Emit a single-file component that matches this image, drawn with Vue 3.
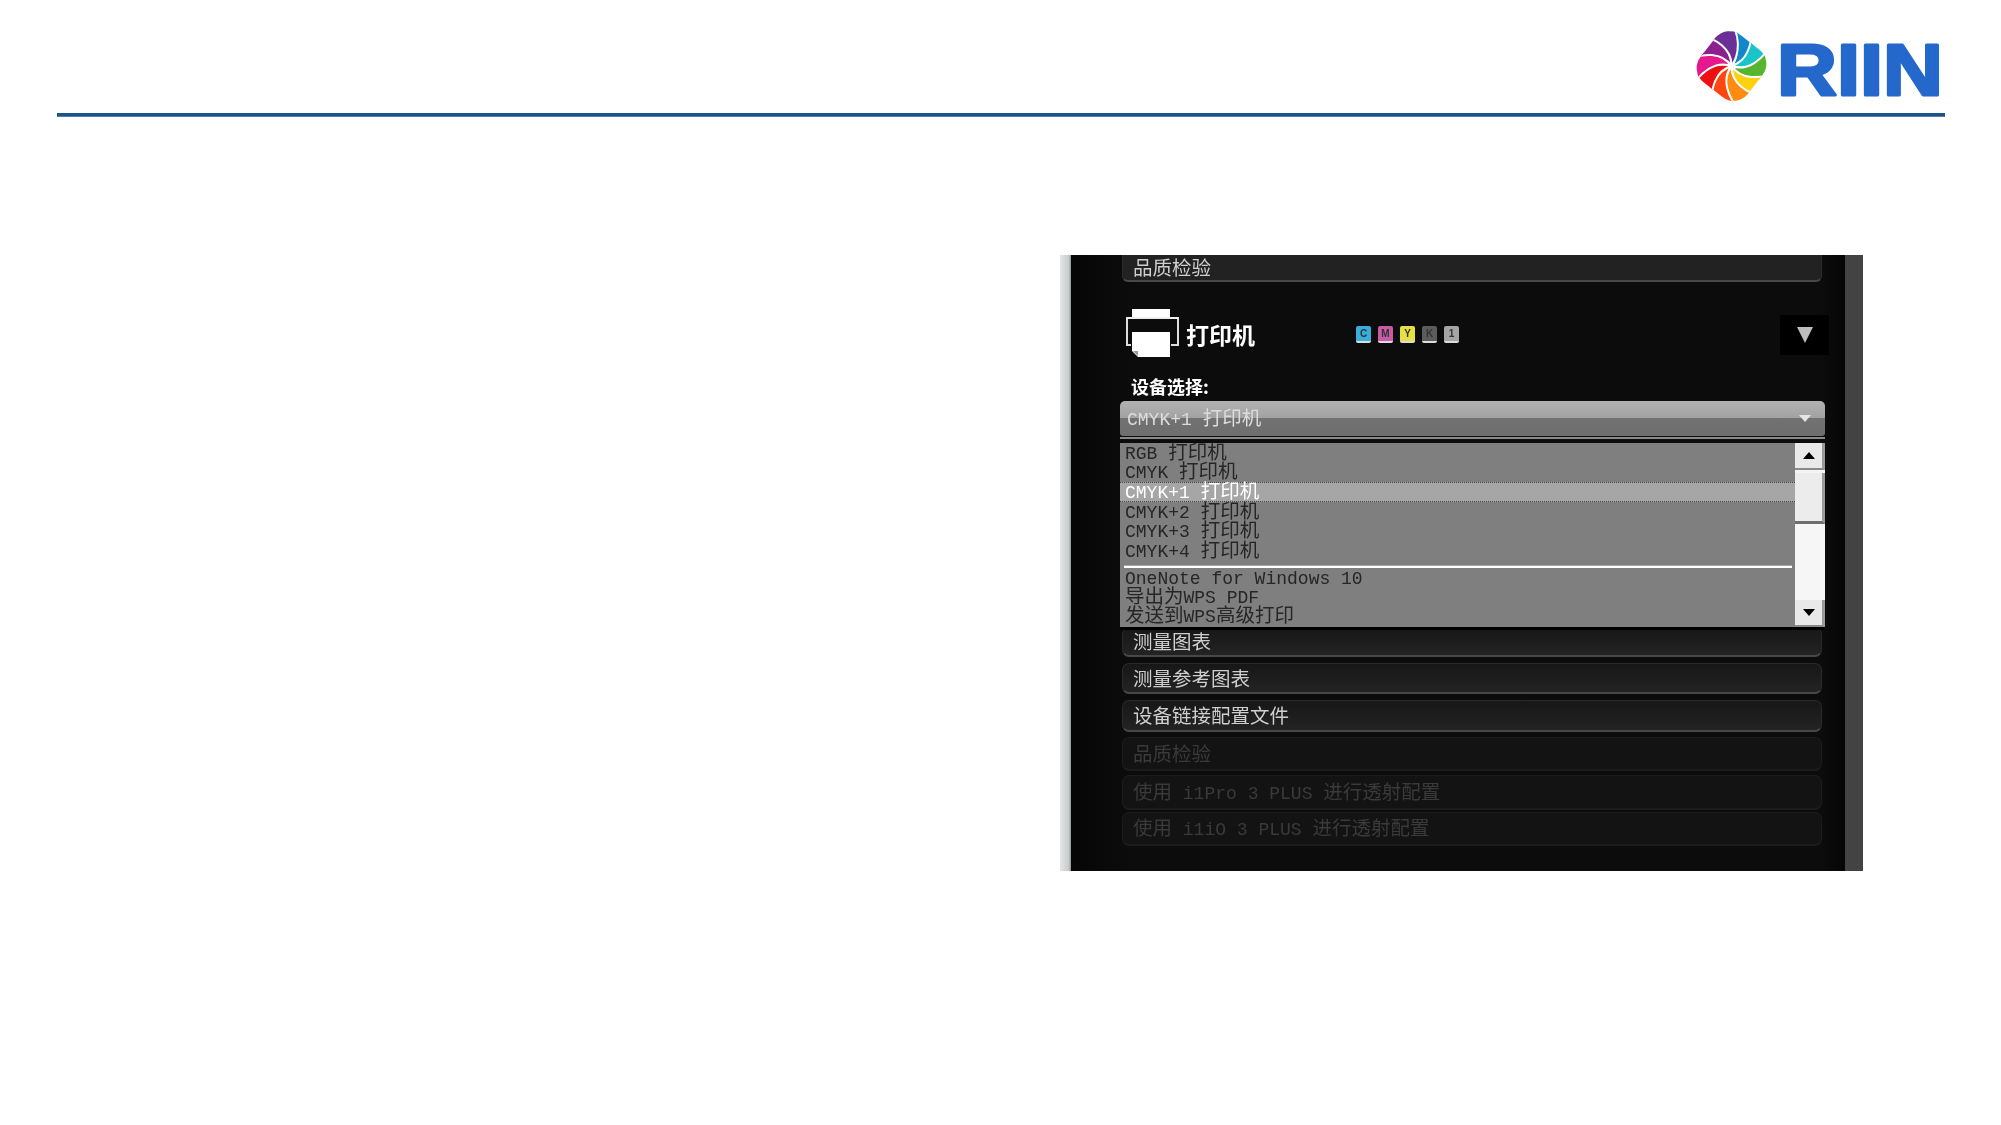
<template>
  <div class="page">
    <header class="top">
      <svg class="logo" width="250" height="98" viewBox="0 0 250 98">
        <defs>
          <clipPath id="wheel">
            <rect x="-30" y="-30" width="60" height="60" rx="18" transform="rotate(38)" />
          </clipPath>
        </defs>
        <g transform="translate(36.5 52)" clip-path="url(#wheel)">
          <path
            v-for="(color, i) in bladeColors"
            :key="color"
            d="M0 0 C7 -14 -1 -31 -21 -45 L15 -48 C23 -27 13 -8 0 0 Z"
            :fill="color"
            stroke="#fff"
            stroke-width="2"
            :transform="`rotate(${12 + i * 36})`"
          />
        </g>
        <text x="82" y="81" class="wordmark" textLength="166" lengthAdjust="spacingAndGlyphs">RIIN</text>
      </svg>
    </header>
    <div class="rule"></div>

    <section class="shot">
      <div class="edge"></div>
      <div class="panel">
        <div class="item first"><span class="cjk">品质检验</span></div>

        <div class="printer">
          <svg class="printer-icon" width="56" height="54" viewBox="0 0 56 54">
            <rect x="7" y="2" width="38" height="9" fill="#fff" />
            <path d="M6 11 H2 V38 H6 M46 11 H53 V38 H46" fill="none" stroke="#ddd" stroke-width="2" />
            <rect x="2" y="10" width="51" height="2" fill="#eee" />
            <path d="M7 25 H45 V50 H13 L7 44 Z" fill="#fff" />
            <path d="M8 44 H13 V49 Z" fill="#999" />
          </svg>
          <span class="printer-title">打印机</span>
          <div class="inks">
            <span v-for="ink in inks" :key="ink.label" class="ink" :style="{ background: ink.color }">{{ ink.label }}</span>
          </div>
          <div class="collapse"><i></i></div>
        </div>

        <div class="device-label">设备选择:</div>
        <div class="select">
          <span class="run-row"><span v-for="(p, i) in parts('CMYK+1 打印机')" :key="i" :class="p.cls">{{ p.text }}</span></span>
          <i class="select-arrow"></i>
        </div>
        <div class="select-line"></div>

        <div class="dropdown">
          <div class="options">
            <div v-for="row in printers" :key="row" class="option" :class="{ selected: row === 'CMYK+1 打印机' }">
              <span class="run-row"><span v-for="(p, i) in parts(row)" :key="i" :class="p.cls">{{ p.text }}</span></span>
            </div>
            <div class="divider"></div>
            <div v-for="row in others" :key="row" class="option small">
              <span class="run-row"><span v-for="(p, i) in parts(row)" :key="i" :class="p.cls">{{ p.text }}</span></span>
            </div>
          </div>
          <div class="scrollbar">
            <div class="sb-btn"><i class="up"></i></div>
            <div class="sb-thumb"></div>
            <div class="sb-track"></div>
            <div class="sb-btn"><i class="down"></i></div>
          </div>
        </div>

        <div class="items">
          <div
            v-for="row in items"
            :key="row.text"
            class="item"
            :class="{ off: row.off }"
            :style="{ height: row.h + 'px', marginBottom: row.gap + 'px' }"
          >
            <span class="run-row"><span v-for="(p, i) in parts(row.text)" :key="i" :class="p.cls">{{ p.text }}</span></span>
          </div>
        </div>
      </div>
      <div class="side"></div>
    </section>
  </div>
</template>

<script setup>
const bladeColors = [
  "#1187c9", "#19c4c9", "#55b52f", "#ffd010", "#ff8c10",
  "#ff4510", "#ee1010", "#e6188e", "#8c2090", "#6a3096",
];

const inks = [
  { label: "C", color: "#38aedb" },
  { label: "M", color: "#c85aa6" },
  { label: "Y", color: "#e6e040" },
  { label: "K", color: "#5c5c5c" },
  { label: "1", color: "#a4a4a4" },
];

const printers = [
  "RGB 打印机",
  "CMYK 打印机",
  "CMYK+1 打印机",
  "CMYK+2 打印机",
  "CMYK+3 打印机",
  "CMYK+4 打印机",
];

const others = ["OneNote for Windows 10", "导出为WPS PDF", "发送到WPS高级打印"];

const items = [
  { text: "测量图表", h: 30, gap: 6 },
  { text: "测量参考图表", h: 31, gap: 6 },
  { text: "设备链接配置文件", h: 32, gap: 5 },
  { text: "品质检验", h: 34, gap: 4, off: true },
  { text: "使用 i1Pro 3 PLUS 进行透射配置", h: 35, gap: 2, off: true },
  { text: "使用 i1iO 3 PLUS 进行透射配置", h: 34, gap: 0, off: true },
];

// latin runs are half the width of the CJK ones, like the bitmap font in the shot
const parts = (text) =>
  text.match(/[\x00-\x7f]+|[^\x00-\x7f]+/g).map((run) => ({
    text: run,
    cls: run.charCodeAt(0) < 128 ? "lat" : "cjk",
  }));
</script>

<style>
html,
body {
  margin: 0;
  background: #fff;
}
</style>

<style scoped>
.page {
  width: 2001px;
  height: 1125px;
  overflow: hidden;
  background: #fff;
  font-family: "Noto Sans CJK SC", "Liberation Mono", sans-serif;
}

.top {
  height: 113px;
  display: flex;
  justify-content: flex-end;
  padding-right: 56px;
}

.logo {
  margin-top: 14px;
}

.wordmark {
  font-family: "Liberation Sans", sans-serif;
  font-weight: 700;
  font-size: 73px;
  fill: #2468cc;
  stroke: #2468cc;
  stroke-width: 3;
  stroke-linejoin: round;
}

.rule {
  height: 4px;
  margin: 0 56px 0 57px;
  background: linear-gradient(180deg, #1b5488 75%, #7fa3c4);
}

.shot {
  width: 803px;
  height: 616px;
  margin: 138px 0 0 1060px;
  display: flex;
  filter: blur(0.5px);
}

.edge {
  width: 11px;
  background: linear-gradient(90deg, #e4e6e6, #c6cbcc 80%, #8e9292);
}

.panel {
  flex: 1;
  padding: 0 20px 0 49px;
  background: linear-gradient(90deg, #060606, #0c0c0c 8%, #0c0c0c 97%, #050505);
  min-width: 0;
}

.side {
  width: 18px;
  background: #434343;
}

.run-row {
  display: block;
  line-height: 18px;
  white-space: pre;
}

.lat {
  font-family: "Liberation Mono", monospace;
  font-size: 18px;
  white-space: pre;
}

.cjk {
  font-family: "Noto Sans CJK SC", sans-serif;
  font-size: 19.5px;
}

.item {
  display: flex;
  align-items: center;
  box-sizing: border-box;
  margin: 0 3px 0 2px;
  padding-left: 10px;
  border: 1px solid #2a2a2a;
  border-bottom: 2px solid #484848;
  border-radius: 7px;
  background: linear-gradient(180deg, #171717, #232323);
  color: #cfcfcf;
  white-space: pre;
}

.item.first {
  height: 27px;
  padding-bottom: 2px;
  border-top: none;
  border-radius: 0 0 6px 6px;
  background: #222;
}

.item.off {
  border-color: #1c1c1c;
  background: #131313;
  color: #3a3a3a;
}

.printer {
  height: 52px;
  margin-top: 26px;
  display: flex;
  align-items: center;
  position: relative;
}

.printer-icon {
  margin-left: 5px;
  flex: none;
}

.printer-title {
  margin-left: 5px;
  width: 170px;
  font-size: 23px;
  line-height: 30px;
  font-weight: 700;
  color: #fff;
}

.inks {
  display: flex;
  gap: 7px;
}

.ink {
  width: 15px;
  height: 17px;
  border-radius: 2px;
  border-bottom: 2px solid #ddd;
  box-sizing: border-box;
  text-align: center;
  font: 700 10px/15px "Liberation Sans", sans-serif;
  color: #333;
}

.collapse {
  position: absolute;
  left: 660px;
  top: 7px;
  width: 49px;
  height: 40px;
  background: #000;
  display: flex;
  align-items: center;
  justify-content: center;
}

.collapse i {
  border-left: 8px solid transparent;
  border-right: 8px solid transparent;
  border-top: 16px solid #bdbdbd;
}

.device-label {
  height: 21px;
  margin: 18px 0 2px 11px;
  line-height: 16px;
  font-size: 18px;
  font-weight: 700;
  color: #fff;
}

.select {
  height: 35px;
  box-sizing: border-box;
  padding-left: 7px;
  padding-bottom: 1px;
  display: flex;
  align-items: center;
  justify-content: space-between;
  border-radius: 5px 5px 3px 3px;
  background: linear-gradient(180deg, #b2b2b2, #a2a2a2 48%, #727272 50%, #6e6e6e);
  color: #dcdcdc;
}

.select-arrow {
  margin-right: 14px;
  border-left: 6px solid transparent;
  border-right: 6px solid transparent;
  border-top: 7px solid #e4e4e4;
}

.select-line {
  height: 2px;
  margin: 1px 0 4px;
  background: #8a8a8a;
}

.dropdown {
  height: 184px;
  display: flex;
  background: #7f7f7f;
  box-shadow: 0 3px 0 #000;
  position: relative;
}

.options {
  flex: 1;
  min-width: 0;
  color: #262626;
}

.option {
  height: 19.6px;
  box-sizing: border-box;
  padding: 0 0 1px 5px;
  display: flex;
  align-items: center;
}

.option.small {
  height: 19px;
}

.option.selected {
  background: #a6a6a6;
  color: #fff;
  border-top: 1px dotted #444;
  border-bottom: 1px dotted #444;
}

.divider {
  height: 3px;
  margin: 4px 3px 1px 4px;
  background: #fff;
  border-top: 1px solid #a8a8a8;
  box-sizing: border-box;
}

.scrollbar {
  width: 30px;
  display: flex;
  flex-direction: column;
  background: #f4f4f4;
}

.sb-btn {
  height: 27px;
  flex: none;
  display: flex;
  align-items: center;
  justify-content: center;
  background: #e9e9e9;
  border-right: 3px solid #9a9a9a;
  border-bottom: 2px solid #8a8a8a;
  box-sizing: border-box;
}

.sb-btn i {
  border-left: 6px solid transparent;
  border-right: 6px solid transparent;
}

.sb-btn i.up {
  border-bottom: 7px solid #000;
}

.sb-btn i.down {
  border-top: 7px solid #000;
}

.sb-thumb {
  height: 51px;
  flex: none;
  margin-top: 3px;
  box-sizing: border-box;
  background: #ececec;
  border-right: 3px solid #9a9a9a;
  border-bottom: 3px solid #6e6e6e;
}

.sb-track {
  flex: 1;
  background: #f6f6f6;
}
</style>
